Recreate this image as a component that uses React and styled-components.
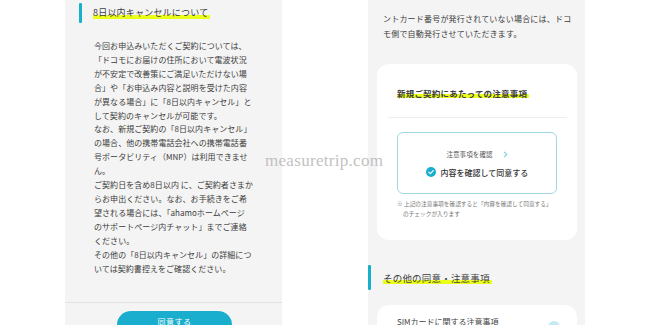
import React from "react";
import styled, { createGlobalStyle } from "styled-components";

const GlobalStyle = createGlobalStyle`
  html, body {
    margin: 0;
    padding: 0;
    background: #ffffff;
  }
  body {
    font-family: "Noto Sans CJK JP", "Noto Sans", sans-serif;
    color: #3c3c3c;
  }
`;

const Page = styled.div`
  position: relative;
  display: flex;
  gap: 86px;
  padding-left: 65px;
  width: 650px;
  height: 325px;
  box-sizing: border-box;
  overflow: hidden;
  background: #ffffff;
`;

const Phone = styled.div`
  display: flex;
  flex-direction: column;
  flex: 0 0 217px;
  height: 325px;
  overflow: hidden;
  background: #f4f4f4;
`;

const SectionHead = styled.div`
  display: flex;
  align-items: center;
  gap: ${(p) => p.$gap}px;
  margin-top: ${(p) => p.$top}px;
  padding-left: ${(p) => p.$indent}px;
`;

const Bar = styled.span`
  width: 3px;
  height: ${(p) => p.$h}px;
  background: #17b0cd;
  border-radius: 1px;
`;

const Marker = styled.span`
  font-size: ${(p) => p.$size}px;
  font-weight: ${(p) => (p.$bold ? 700 : 400)};
  line-height: 14px;
  letter-spacing: 0.2px;
  color: #3e3e3e;
  white-space: nowrap;
  padding-right: 2px;
  background: linear-gradient(transparent 62%, #ecff1a 62%, #ecff1a 92%, transparent 92%);
`;

const Body = styled.p`
  margin: ${(p) => p.$top}px 0 0;
  padding-left: ${(p) => p.$indent}px;
  font-size: 8px;
  line-height: ${(p) => p.$lh}px;
  letter-spacing: ${(p) => p.$ls}px;
  color: #3c3c3c;
  white-space: nowrap;
`;

const Footer = styled.div`
  margin-top: 27px;
  border-top: 1px solid #e2e2e2;
  padding: 8px 0 0 52px;
`;

const PrimaryButton = styled.button`
  width: 115px;
  height: 28px;
  border: none;
  border-radius: 14px;
  background: #19aecd;
  color: #ffffff;
  font-family: inherit;
  font-size: 8px;
  line-height: 10px;
  letter-spacing: 0.5px;
  padding: 6px 0 0;
  display: flex;
  align-items: flex-start;
  justify-content: center;
`;

const Card = styled.div`
  display: flex;
  flex-direction: column;
  margin: ${(p) => p.$top}px 8px 0 9px;
  height: ${(p) => p.$h}px;
  flex-shrink: 0;
  background: #ffffff;
  border-radius: 12px;
  box-sizing: border-box;
  padding-top: ${(p) => p.$pad}px;
`;

const CardTitle = styled.div`
  padding-left: 20px;
`;

const CardDivider = styled.div`
  margin: 15px 10px 0 11px;
  border-top: 1px solid #eeeeee;
`;

const ConfirmBox = styled.div`
  margin: 14px 20px 0;
  height: 62px;
  box-sizing: border-box;
  border: 1px solid #9fd9e4;
  border-radius: 6px;
  display: flex;
  flex-direction: column;
  align-items: center;
  justify-content: center;
  gap: 6px;
`;

const ConfirmLink = styled.div`
  display: flex;
  align-items: center;
  gap: 10px;
  height: 12px;
  font-size: 6.5px;
  color: #555555;
  letter-spacing: 0.1px;
`;

const AgreeRow = styled.div`
  display: flex;
  align-items: center;
  gap: 5px;
  height: 12px;
  font-size: 8px;
  font-weight: 500;
  color: #333333;
  white-space: nowrap;
`;

const Note = styled.p`
  margin: 5px 0 0;
  padding-left: 26px;
  text-indent: -6px;
  font-size: 5.7px;
  line-height: 10px;
  color: #777777;
  white-space: nowrap;
`;

const SubItem = styled.div`
  display: flex;
  align-items: flex-start;
  justify-content: space-between;
  padding: 0 17px 0 20px;
  font-size: 8px;
  line-height: 12px;
  color: #444444;
`;

const Dot = styled.span`
  width: 12px;
  height: 12px;
  margin-top: 5px;
  border-radius: 50%;
  background: #c4ebf2;
`;

const Watermark = styled.div`
  position: absolute;
  left: 265px;
  top: 151px;
  font-family: "Liberation Serif", "DejaVu Serif", serif;
  font-size: 17px;
  line-height: 20px;
  letter-spacing: 0.3px;
  color: #b8b8b8;
  opacity: 0.85;
  pointer-events: none;
`;

const leftLines = [
  "今回お申込みいただくご契約については、",
  "「ドコモにお届けの住所において電波状況",
  "が不安定で改善策にご満足いただけない場",
  "合」や「お申込み内容と説明を受けた内容",
  "が異なる場合」に「8日以内キャンセル」と",
  "して契約のキャンセルが可能です。",
  "なお、新規ご契約の「8日以内キャンセル」",
  "の場合、他の携帯電話会社への携帯電話番",
  "号ポータビリティ（MNP）は利用できませ",
  "ん。",
  "ご契約日を含め8日以内 に、ご契約者さまか",
  "らお申出ください。なお、お手続きをご希",
  "望される場合には、「ahamoホームページ",
  "のサポートページ内チャット」までご連絡",
  "ください。",
  "その他の「8日以内キャンセル」の詳細につ",
  "いては契約書控えをご確認ください。",
];

const withBreaks = (lines) =>
  lines.map((l, i) => (
    <React.Fragment key={i}>
      {l}
      {i < lines.length - 1 && <br />}
    </React.Fragment>
  ));

function Chevron() {
  return (
    <svg width="5" height="7" viewBox="0 0 5 7">
      <path d="M1 0.8 L3.8 3.5 L1 6.2" fill="none" stroke="#7fd0de" strokeWidth="1.1" />
    </svg>
  );
}

function CheckCircle() {
  return (
    <svg width="10" height="10" viewBox="0 0 10 10">
      <circle cx="5" cy="5" r="5" fill="#19aecd" />
      <path d="M2.8 5.1 L4.4 6.6 L7.3 3.6" fill="none" stroke="#ffffff" strokeWidth="1.2" strokeLinecap="round" strokeLinejoin="round" />
    </svg>
  );
}

export default function App() {
  return (
    <>
      <GlobalStyle />
      <Page>
        <Phone>
          <SectionHead $top={3} $indent={14} $gap={11}>
            <Bar $h={20} />
            <Marker $size={9}>8日以内キャンセルについて</Marker>
          </SectionHead>
          <Body $top={16} $indent={29} $lh={13.9} $ls={0.05}>
            {withBreaks(leftLines)}
          </Body>
          <Footer>
            <PrimaryButton>同意する</PrimaryButton>
          </Footer>
        </Phone>

        <Phone>
          <Body $top={11} $indent={15} $lh={15} $ls={0.2}>
            {withBreaks([
              "ントカード番号が発行されていない場合には、ドコ",
              "モ側で自動発行させていただきます。",
            ])}
          </Body>
          <Card $top={23} $h={176} $pad={14}>
            <CardTitle>
              <Marker $size={8.5} $bold>新規ご契約にあたっての注意事項</Marker>
            </CardTitle>
            <CardDivider />
            <ConfirmBox>
              <ConfirmLink>
                <span>注意事項を確認</span>
                <Chevron />
              </ConfirmLink>
              <AgreeRow>
                <CheckCircle />
                <span>内容を確認して同意する</span>
              </AgreeRow>
            </ConfirmBox>
            <Note>
              ※ 上記の注意事項を確認すると「内容を確認して同意する」
              <br />
              のチェックが入ります
            </Note>
          </Card>
          <SectionHead $top={25} $indent={0} $gap={12}>
            <Bar $h={25} />
            <Marker $size={9.5}>その他の同意・注意事項</Marker>
          </SectionHead>
          <Card $top={15} $h={60} $pad={11}>
            <SubItem>
              <span>SIMカードに関する注意事項</span>
              <Dot />
            </SubItem>
          </Card>
        </Phone>
        <Watermark>measuretrip.com</Watermark>
      </Page>
    </>
  );
}
